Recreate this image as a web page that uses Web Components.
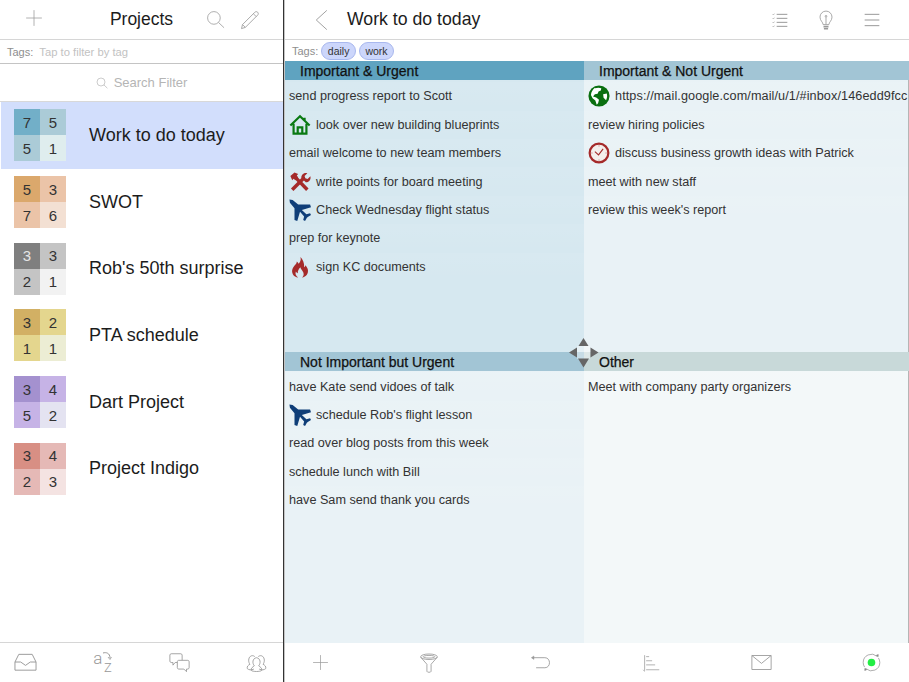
<!DOCTYPE html>
<html>
<head>
<meta charset="utf-8">
<title>Projects</title>
<style>
  html, body { margin: 0; padding: 0; height: 100%; background: #fff; }
  body { font-family: "Liberation Sans", Arial, sans-serif; overflow: hidden; }
</style>
</head>
<body>
<app-shell>
  <project-pane slot="left"></project-pane>
  <detail-pane slot="right"></detail-pane>
</app-shell>

<script>
// icon paths, all on a 24x24 box
const ICONS = {
  plus: { s: '<path d="M12 1.5v21M1.5 12h21"/>' },
  search: { s: '<circle cx="10" cy="10" r="8"/><path d="M15.8 15.8l7 6.6"/>' },
  pencil: { s: '<path d="M3 17.5L17.8 2.7c1-1 2.4-1 3.4 0s1 2.4 0 3.4L6.4 20.9 1.8 22.3zM3 17.5l3.4 3.4M16 4.5l3.5 3.5"/>' },
  back: { s: '<path d="M14 1.5L2.5 12 14 22.5"/>' },
  checklist: { s: '<path d="M7 3.5h16M7 9.5h16M7 15.5h16M7 21.5h16" stroke-width="1.5"/><path d="M1 3.5l1 1 1.6-2M1 9.5l1 1 1.6-2M1 15.5l1 1 1.6-2M1 21.5l1 1 1.6-2" stroke-width="1"/>' },
  bulb: { s: '<path d="M8.5 17.5c0-3-3.7-4.6-3.7-9a7.2 7.2 0 0 1 14.4 0c0 4.4-3.7 6-3.7 9z"/><path d="M12 17V8.5"/><circle cx="12" cy="7.5" r="1"/><path d="M9 20h6M9.5 22.5h5" stroke-width="2"/>' },
  menu: { s: '<path d="M1 3.5h22M1 12h22M1 20.5h22" stroke-width="1.5"/>' },
  inbox: { s: '<path d="M5 3.5h14l4 8v8.5H1v-8.5zM1 11.5h6l5 3.5 5-3.5h6"/>' },
  chat: { s: '<path d="M2.5 2h11c.8 0 1.5.7 1.5 1.5v7c0 .8-.7 1.5-1.5 1.5H7l-2.5 3V12h-2C1.7 12 1 11.3 1 10.5v-7C1 2.7 1.7 2 2.5 2z"/><path d="M11 9.5h10.5c.8 0 1.500.7 1.500 1.500v7c0 .8-.7 1.500-1.500 1.500H20v3l-3-3h-6c-.8 0-1.500-.7-1.500-1.500v-7c0-.8.7-1.500 1.500-1.500z" fill="#fff"/>' },
  people: { s: '<path d="M9 19.5c-3 1.5-6 1-7.5-.5-.8-2.5 1.2-4 3-5-2-2.5-2-7 .5-9 1.500-1.200 3.500-1 5 .2"/><path d="M15 19.5c3 1.5 6 1 7.5-.5.8-2.5-1.2-4-3-5 2-2.5 2-7-.5-9-1.500-1.200-3.500-1-5 .2"/><path d="M6 21c-.8-2.5 2-4 3.5-5.200-2.500-3-2.300-8.500 2.500-9.300 4.800.8 5 6.300 2.500 9.300C16 17 18.800 18.500 18 21c-1.500 1.700-10.500 1.700-12 0z"/>' },
  funnel: { s: '<ellipse cx="12" cy="4.5" rx="10" ry="3.3"/><ellipse cx="12" cy="4.5" rx="7" ry="1.6"/><path d="M2 5l7.5 8.5V22c0 1.5 5 1.5 5 0v-8.5L22 5"/>' },
  undo: { s: '<path d="M3 6.5h14c7 0 7 11.5 0 11.5H7"/><path d="M4.5 4.5v4l-3-2z" fill="#999" stroke-width=".5"/>' },
  sorted: { s: '<path d="M3.5 1.5v21" stroke-width="1"/><path d="M5.5 3.5h4M5.5 9h8M5.5 14.5h12M5.5 21H23" stroke-width="1"/><path d="M1.5 21l2 2.5" stroke-width=".8"/>' },
  mail: { s: '<path d="M1 4h22v16H1zM1 4l11 9 11-9"/>' },
  sync: { s: '<path d="M19 4.2A10.5 10.5 0 0 0 1.5 12c0 2.2.6 4.2 1.8 5.8M5 19.8A10.5 10.5 0 0 0 22.5 12c0-2.2-.6-4.2-1.800-5.800"/><path d="M18 3l2.300 1.700.2-2.700zM6 21l-2.300-1.700-.2 2.700z" fill="#777"/><circle cx="12" cy="12" r="4.8" fill="#22ee44" stroke="none"/>' },
  globe: { raw: '<circle cx="12" cy="12" r="11.5" fill="#0a6f10"/><path d="M8 3.5c2-.8 4.500-.8 6.500 0l-.5 2.500-2.500 1-1 2.500-3 .5-2 2.500 3.500 1 3 2.500-1 4-1.500 1.500-1.500-4.500-3-2.500-1.800-3.500c.3-3.500 1.800-6 4.300-8zM16.500 10l4-.8c.7 2.500.4 5-.8 7.300l-2.700-2.500z" fill="#fff"/>' },
  home: { raw: '<path d="M1.5 12.5L12 2.5l10.5 10M5 10.5v11h14v-11M9.5 21.5v-7h5v7M17 4.2v3.6" fill="none" stroke="#0a7a12" stroke-width="2.4"/>' },
  clock: { raw: '<circle cx="12" cy="12" r="10.2" fill="#f4efec" stroke="#a52a2a" stroke-width="2.4"/><path d="M7.5 10.5l4 3.5 5-6.5" fill="none" stroke="#a52a2a" stroke-width="1.2"/><path d="M12 3.5V5M12 19v1.5M3.5 12H5M19 12h1.5" stroke="#c98a8a" stroke-width="1"/>' },
  tools: { raw: '<path d="M3.5 20.5L16 8" stroke="#a52a2a" stroke-width="3.8" fill="none"/><path d="M13.5 7.5c-.3-3.3 3-6 6.500-5l-3 3 .8 2.500 2.500.8 3-3c1 3.500-1.800 6.800-5 6.500z" fill="#a52a2a"/><path d="M7 7l13 13.500" stroke="#a52a2a" stroke-width="3.8" fill="none"/><path d="M1.5 5.5L6 1.5l4 1.8L8.5 5l1.5 2-3 3-2-1.500-1.500 1.500z" fill="#a52a2a"/>' },
  plane: { raw: '<path d="M.5.5L4 1l6 5h13l1 3-10 3 5 4.5 4-1 1 2-3.5 2-1 1-2 3.500-2-1 1-4-4.500-5-3 10-3-1V10L1 4z" fill="#0f3e78"/>' },
  flame: { raw: '<path d="M12.5 1c1 3.5-.5 5.5-2 7.5-.5-1-1-1.800-2-2.500.2 2.500-3 4.500-4.500 7.500-2 4.500 1 9.500 6 10-2.500-1.500-3.500-4-2.500-6.500.5 1 1 1.500 2 1.800 0-3 1.500-5 3-6.500 0 2.500 3.500 4 3.500 7.500 0 1.500-.8 2.800-2 3.700 5-.5 7.500-4.500 6.500-9-.4-2-1.500-3-2.500-4.500-.3 1-.7 1.800-1.500 2.300.5-4.800-1.500-8.800-4-11.300z" fill="#a52a2a"/>' }
};

class UiIcon extends HTMLElement {
  constructor() {
    super();
    this.attachShadow({ mode: 'open' });
  }

  connectedCallback() {
    const icon = ICONS[this.getAttribute('name')];
    const size = this.getAttribute('size') || 24;
    const color = this.getAttribute('color') || '#999';
    const body = icon.raw || `<g fill="none" stroke="${color}" stroke-width="${this.getAttribute('weight') || 1}">${icon.s}</g>`;
    this.shadowRoot.innerHTML = `
      <style>
        :host { display: inline-flex; flex: none; width: ${size}px; height: ${size}px; }
        svg { display: block; width: 100%; height: 100%; }
      </style>
      <svg viewBox="0 0 24 24">${body}</svg>
    `;
  }
}

// sort icon: the letters stay real text
class AzIcon extends HTMLElement {
  constructor() {
    super();
    this.attachShadow({ mode: 'open' });
    this.shadowRoot.innerHTML = `
      <style>
        :host { display: inline-grid; flex: none; grid-template-columns: 10px 9px; grid-template-rows: 11px 10px; width: 19px; height: 21px; font-family: Roboto, "Liberation Sans", sans-serif; font-weight: 300; color: #999; line-height: 10px; }
        .a { font-size: 17px; align-self: center; }
        .z { font-size: 13px; grid-column: 2; grid-row: 2; text-align: center; }
        svg { display: block; }
      </style>
      <span class="a">a</span>
      <svg width="9" height="11" viewBox="0 0 9 11" fill="none" stroke="#999"><path d="M0 1c3-1 7 0 7 5"/><path d="M5 5l2 2.5L8.5 5" stroke-width=".8"/></svg>
      <span class="z">Z</span>
    `;
  }
}

class AppShell extends HTMLElement {
  constructor() {
    super();
    this.attachShadow({ mode: 'open' });
    this.shadowRoot.innerHTML = `
      <style>
        :host { display: grid; grid-template-columns: 284px 1fr; height: 682px; width: 909px; }
        .left { border-right: 1px solid #333; display: flex; min-width: 0; }
        .right { display: flex; min-width: 0; }
        ::slotted(*) { flex: 1; min-width: 0; }
      </style>
      <div class="left"><slot name="left"></slot></div>
      <div class="right"><slot name="right"></slot></div>
    `;
  }
}

class ToolBar extends HTMLElement {
  constructor() {
    super();
    this.attachShadow({ mode: 'open' });
    this.shadowRoot.innerHTML = `
      <style>
        :host { display: flex; flex: none; height: 39px; align-items: center; justify-content: space-between; }
        :host([pos="top"]) { border-bottom: 1px solid #d6d6d6; }
        :host([pos="bottom"]) { border-top: 1px solid #d6d6d6; }
      </style>
      <slot></slot>
    `;
  }
}

class TagRow extends HTMLElement {
  constructor() {
    super();
    this.attachShadow({ mode: 'open' });
    this.shadowRoot.innerHTML = `
      <style>
        :host { display: flex; flex: none; align-items: center; gap: 3px; box-sizing: border-box; padding-left: 7px; font-size: 11px; color: #8e8e8e; }
      </style>
      <span>Tags:</span>
      <slot></slot>
    `;
  }
}

class TagPill extends HTMLElement {
  constructor() {
    super();
    this.attachShadow({ mode: 'open' });
    this.shadowRoot.innerHTML = `
      <style>
        :host { display: inline-block; height: 16px; line-height: 16px; padding: 0 5.5px; border: 1px solid #a9b8ee; border-radius: 9px; background: #ccd6fb; color: #333; font-size: 10.5px; }
      </style>
      <slot></slot>
    `;
  }
}

class MatrixIcon extends HTMLElement {
  constructor() {
    super();
    this.attachShadow({ mode: 'open' });
  }

  connectedCallback() {
    const nums = this.getAttribute('nums').split(',');
    const colors = this.getAttribute('colors').split(',');
    const light = this.hasAttribute('light');
    const cells = nums.map((n, i) => `<div style="background:${colors[i]}${light && i === 0 ? ';color:#e6e6e6' : ''}">${n}</div>`).join('');
    this.shadowRoot.innerHTML = `
      <style>
        :host { display: grid; flex: none; grid-template-columns: 26px 26px; grid-template-rows: 26px 26px; font-size: 15px; color: #333; }
        div { display: flex; align-items: center; justify-content: center; }
      </style>
      ${cells}
    `;
  }
}

class ProjectRow extends HTMLElement {
  constructor() {
    super();
    this.attachShadow({ mode: 'open' });
    this.shadowRoot.innerHTML = `
      <style>
        :host { display: flex; flex: none; height: 66.7px; align-items: center; padding-left: 14px; box-sizing: border-box; font-size: 18px; color: #1c1c1c; }
        :host([selected]) { background: #d2defc; margin-left: 1px; padding-left: 13px; }
        .name { margin-left: 23px; }
      </style>
      <slot name="icon"></slot>
      <span class="name"><slot></slot></span>
    `;
  }
}

class ProjectPane extends HTMLElement {
  constructor() {
    super();
    this.attachShadow({ mode: 'open' });
    this.shadowRoot.innerHTML = `
      <style>
        :host { display: flex; flex-direction: column; height: 682px; background: #fff; }
        .top { padding: 0 23px 0 25px; }
        .title { font-size: 17.5px; color: #1c1c1c; flex: 1; text-align: center; padding-right: 2px; }
        .top-icons { display: flex; gap: 15px; width: 54px; }
        .plus { width: 54px; }
        tag-row { height: 24px; border-bottom: 1px solid #c4c4c4; }
        .hint { color: #c2c2c2; margin-left: 3px; font-size: 11.25px; }
        .search { flex: none; height: 37px; display: flex; align-items: center; justify-content: center; gap: 6px; font-size: 13px; color: #b5b5b5; border-bottom: 1px solid #d8d8d8; }
        .list { flex: 1; display: flex; flex-direction: column; min-height: 0; }
        .bottom { padding: 0 16px 0 14px; }
      </style>
      <tool-bar pos="top" class="top">
        <div class="plus"><ui-icon name="plus" size="18"></ui-icon></div>
        <span class="title">Projects</span>
        <div class="top-icons"><ui-icon name="search" size="19"></ui-icon><ui-icon name="pencil" size="20"></ui-icon></div>
      </tool-bar>
      <tag-row><span class="hint">Tap to filter by tag</span></tag-row>
      <div class="search"><ui-icon name="search" size="12"></ui-icon><span>Search Filter</span></div>
      <div class="list">
        <project-row selected><matrix-icon slot="icon" nums="7,5,5,1" colors="#72afc8,#abcbd7,#abcbd7,#dfedee"></matrix-icon>Work to do today</project-row>
        <project-row><matrix-icon slot="icon" nums="5,3,7,6" colors="#dba86c,#ebc4a8,#ebc4a8,#f3e0d3"></matrix-icon>SWOT</project-row>
        <project-row><matrix-icon slot="icon" light nums="3,3,2,1" colors="#7f7f7f,#c4c4c4,#c4c4c4,#f2f2f2"></matrix-icon>Rob's 50th surprise</project-row>
        <project-row><matrix-icon slot="icon" nums="3,2,1,1" colors="#d2b064,#e4d68e,#e4d68e,#ecedd4"></matrix-icon>PTA schedule</project-row>
        <project-row><matrix-icon slot="icon" nums="3,4,5,2" colors="#a491cf,#c6b3e6,#c6b3e6,#e4e3f1"></matrix-icon>Dart Project</project-row>
        <project-row><matrix-icon slot="icon" nums="3,4,2,3" colors="#d88f84,#e5b9b6,#e5b9b6,#f4e3e2"></matrix-icon>Project Indigo</project-row>
      </div>
      <tool-bar pos="bottom" class="bottom">
        <ui-icon name="inbox" size="23"></ui-icon>
        <az-icon></az-icon>
        <ui-icon name="chat" size="21"></ui-icon>
        <ui-icon name="people" size="21"></ui-icon>
      </tool-bar>
    `;
  }
}

class TaskRow extends HTMLElement {
  constructor() {
    super();
    this.attachShadow({ mode: 'open' });
    this.shadowRoot.innerHTML = `
      <style>
        :host { display: flex; align-items: center; flex: none; height: 28.4px; padding-left: 4px; box-sizing: border-box; font-size: 12.65px; color: #333; white-space: nowrap; overflow: hidden; background: linear-gradient(rgba(255,255,255,.06), rgba(255,255,255,0)); }
        :host([wide]) { letter-spacing: .1px; }
        ::slotted(ui-icon) { margin-right: 5px; }
      </style>
      <slot></slot>
    `;
  }
}

class QuadPanel extends HTMLElement {
  constructor() {
    super();
    this.attachShadow({ mode: 'open' });
    this.shadowRoot.innerHTML = `
      <style>
        :host { display: flex; flex-direction: column; min-width: 0; min-height: 0; overflow: hidden; background: var(--body); }
        .head { flex: none; height: 19px; line-height: 21px; padding-left: 15px; background: var(--head); color: #111; font-size: 14px; -webkit-text-stroke: .25px #111; }
        .rows { display: flex; flex: 1; flex-direction: column; min-height: 0; padding-top: var(--rows-top, 1.4px); }
        :host([tail]) .rows { border-right: 1px solid #b5b5b5; }
      </style>
      <div class="head">${this.getAttribute('title')}</div>
      <div class="rows"><slot></slot></div>
    `;
  }
}

class MoveHandle extends HTMLElement {
  constructor() {
    super();
    this.attachShadow({ mode: 'open' });
    this.shadowRoot.innerHTML = `
      <style>
        :host { position: absolute; left: 284px; top: 338px; width: 30px; height: 30px; display: block; }
        svg { display: block; }
      </style>
      <svg width="30" height="30" viewBox="0 0 30 30">
        <rect x="8" y="8" width="13" height="13" fill="#fff" opacity=".4"/>
        <path d="M14.5 0l5 8h-10zM14.5 29.5l-5.5-9h11zM0 14.5l8-5v10zM29.5 14.5l-8 5v-10z" fill="#666"/>
      </svg>
    `;
  }
}

class DetailPane extends HTMLElement {
  constructor() {
    super();
    this.attachShadow({ mode: 'open' });
    this.shadowRoot.innerHTML = `
      <style>
        :host { display: flex; flex-direction: column; height: 682px; position: relative; background: #fff; border-left: 1px solid #c4c4c4; box-sizing: border-box; }
        .top { padding: 0 29px 0 29px; justify-content: flex-start; }
        .title { font-size: 17.7px; color: #1c1c1c; margin-left: 11px; flex: 1; }
        .top-icons { display: flex; gap: 28px; align-items: center; }
        tag-row { height: 21px; }
        .grid { flex: 1; min-height: 0; display: grid; grid-template-columns: 299px 1fr; grid-template-rows: 291px 1fr; }
        .bottom { padding: 0 27.5px 0 26.5px; border-top: 0; }
        .q1 { --head: #5fa3c0; --body: #d6e8f0; --rows-top: 2.3px; }
        .q2 { --head: #a2c5d5; --body: #e9f2f6; --rows-top: 2.3px; }
        .q3 { --head: #a2c5d5; --body: #e9f2f6; }
        .q4 { --head: #c8d9d9; --body: #f3f8f9; }
      </style>
      <tool-bar pos="top" class="top">
        <ui-icon name="back" size="22"></ui-icon>
        <span class="title">Work to do today</span>
        <div class="top-icons">
          <ui-icon name="checklist" size="16"></ui-icon>
          <ui-icon name="bulb" size="20"></ui-icon>
          <ui-icon name="menu" size="16"></ui-icon>
        </div>
      </tool-bar>
      <tag-row><tag-pill>daily</tag-pill><tag-pill>work</tag-pill></tag-row>
      <div class="grid">
        <quad-panel class="q1" title="Important &amp; Urgent">
          <task-row>send progress report to Scott</task-row>
          <task-row><ui-icon name="home" size="22"></ui-icon>look over new building blueprints</task-row>
          <task-row>email welcome to new team members</task-row>
          <task-row><ui-icon name="tools" size="22"></ui-icon>write points for board meeting</task-row>
          <task-row><ui-icon name="plane" size="22"></ui-icon>Check Wednesday flight status</task-row>
          <task-row>prep for keynote</task-row>
          <task-row><ui-icon name="flame" size="22"></ui-icon>sign KC documents</task-row>
        </quad-panel>
        <quad-panel class="q2" tail title="Important &amp; Not Urgent">
          <task-row wide><ui-icon name="globe" size="22"></ui-icon>https://mail.google.com/mail/u/1/#inbox/146edd9fcc</task-row>
          <task-row>review hiring policies</task-row>
          <task-row><ui-icon name="clock" size="22"></ui-icon>discuss business growth ideas with Patrick</task-row>
          <task-row>meet with new staff</task-row>
          <task-row>review this week's report</task-row>
        </quad-panel>
        <quad-panel class="q3" title="Not Important but Urgent">
          <task-row>have Kate send vidoes of talk</task-row>
          <task-row><ui-icon name="plane" size="22"></ui-icon>schedule Rob's flight lesson</task-row>
          <task-row>read over blog posts from this week</task-row>
          <task-row>schedule lunch with Bill</task-row>
          <task-row>have Sam send thank you cards</task-row>
        </quad-panel>
        <quad-panel class="q4" tail title="Other">
          <task-row>Meet with company party organizers</task-row>
        </quad-panel>
      </div>
      <move-handle></move-handle>
      <tool-bar pos="bottom" class="bottom">
        <ui-icon name="plus" size="17"></ui-icon>
        <ui-icon name="funnel" size="20"></ui-icon>
        <ui-icon name="undo" size="21"></ui-icon>
        <ui-icon name="sorted" size="18"></ui-icon>
        <ui-icon name="mail" size="21"></ui-icon>
        <ui-icon name="sync" size="19"></ui-icon>
      </tool-bar>
    `;
  }
}

customElements.define('ui-icon', UiIcon);
customElements.define('az-icon', AzIcon);
customElements.define('app-shell', AppShell);
customElements.define('tool-bar', ToolBar);
customElements.define('tag-row', TagRow);
customElements.define('tag-pill', TagPill);
customElements.define('matrix-icon', MatrixIcon);
customElements.define('project-row', ProjectRow);
customElements.define('project-pane', ProjectPane);
customElements.define('task-row', TaskRow);
customElements.define('quad-panel', QuadPanel);
customElements.define('move-handle', MoveHandle);
customElements.define('detail-pane', DetailPane);
</script>
</body>
</html>
